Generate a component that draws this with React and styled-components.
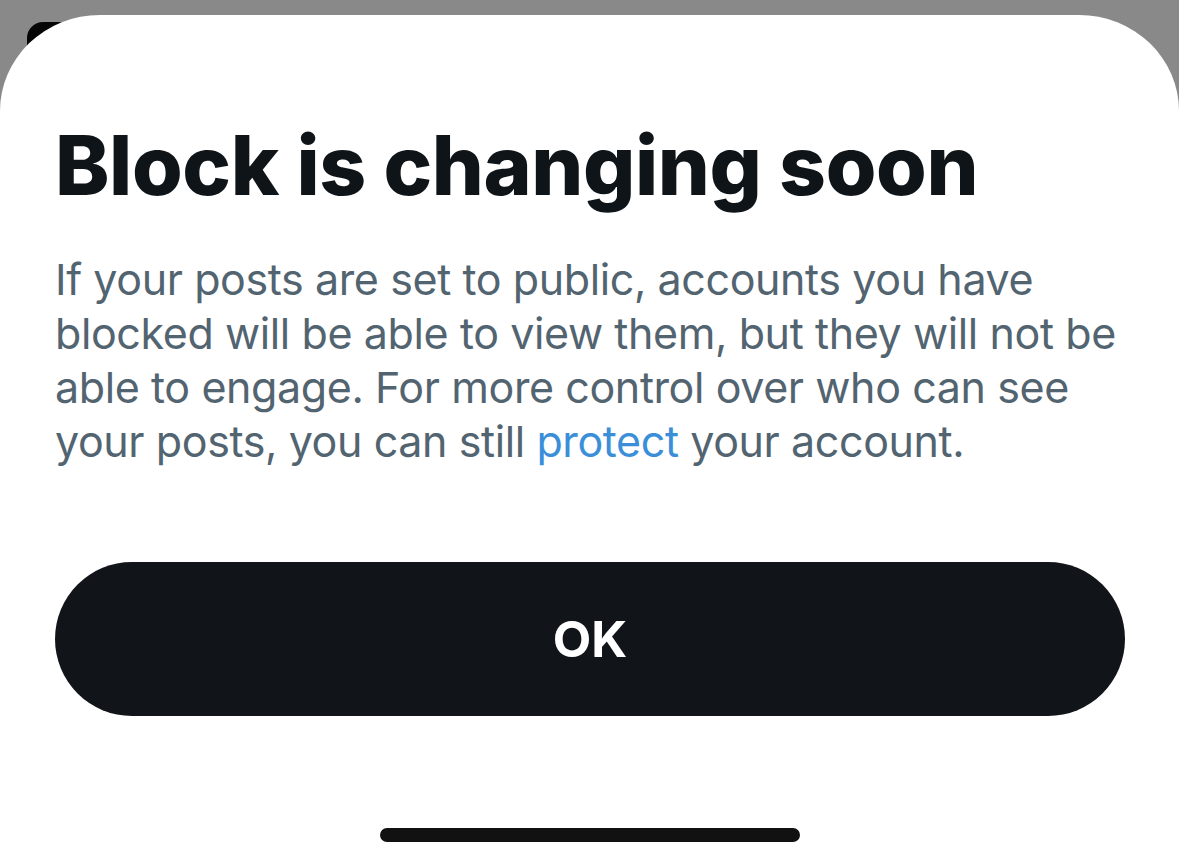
import React from "react";
import styled, { createGlobalStyle } from "styled-components";

const GlobalStyle = createGlobalStyle`
    html, body {
        margin : 0;
        padding : 0;
        background : #898989;
    }
    body {
        font-family : Inter, "Noto Sans", sans-serif;
    }
`;

const App = () => {
    return (
        <>
            <GlobalStyle />
            <Page>
                <BehindCard />
                <Sheet>
                    <Title>Block is changing soon</Title>
                    <Body>
                        If your posts are set to public, accounts you have blocked will be able to view them, but they will not be able to engage. For more control over who can see your posts, you can still <Link>protect</Link> your account.
                    </Body>
                    <OkButton>OK</OkButton>
                    <HomeIndicator />
                </Sheet>
            </Page>
        </>
    );
};

const Page = styled.div`
    width : 1179px;
    height : 867px;
    overflow : hidden;
    background : #898989;
    padding-top : 22px;
    box-sizing : border-box;
`;

const BehindCard = styled.div`
    width : 200px;
    height : 60px;
    margin-left : 27px;
    background : #050505;
    border-radius : 16px;
`;

const Sheet = styled.div`
    margin-top : -67px;
    height : 852px;
    background : #ffffff;
    border-top-left-radius : 100px 96px;
    border-top-right-radius : 100px 96px;
    padding : 0 54px 0 55px;
    box-sizing : border-box;
    display : flex;
    flex-direction : column;
`;

const Title = styled.h1`
    margin : 101px 0 0 0;
    font-size : 82px;
    line-height : 100px;
    font-weight : 800;
    letter-spacing : -0.4px;
    color : #0f1419;
`;

const Body = styled.p`
    margin : 36px 0 0 0;
    font-size : 43px;
    line-height : 54px;
    font-weight : 400;
    letter-spacing : -0.4px;
    color : #536471;
`;

const Link = styled.span`
    color : #3b8fd9;
`;

const OkButton = styled.button`
    margin-top : 94px;
    height : 154px;
    width : 100%;
    border : none;
    border-radius : 77px;
    background : #11151a;
    color : #ffffff;
    font-family : Inter, sans-serif;
    font-size : 50px;
    font-weight : 700;
    cursor : pointer;
`;

const HomeIndicator = styled.div`
    width : 420px;
    height : 14px;
    border-radius : 7px;
    background : #111111;
    margin : 112px auto 0;
`;

export default App;
